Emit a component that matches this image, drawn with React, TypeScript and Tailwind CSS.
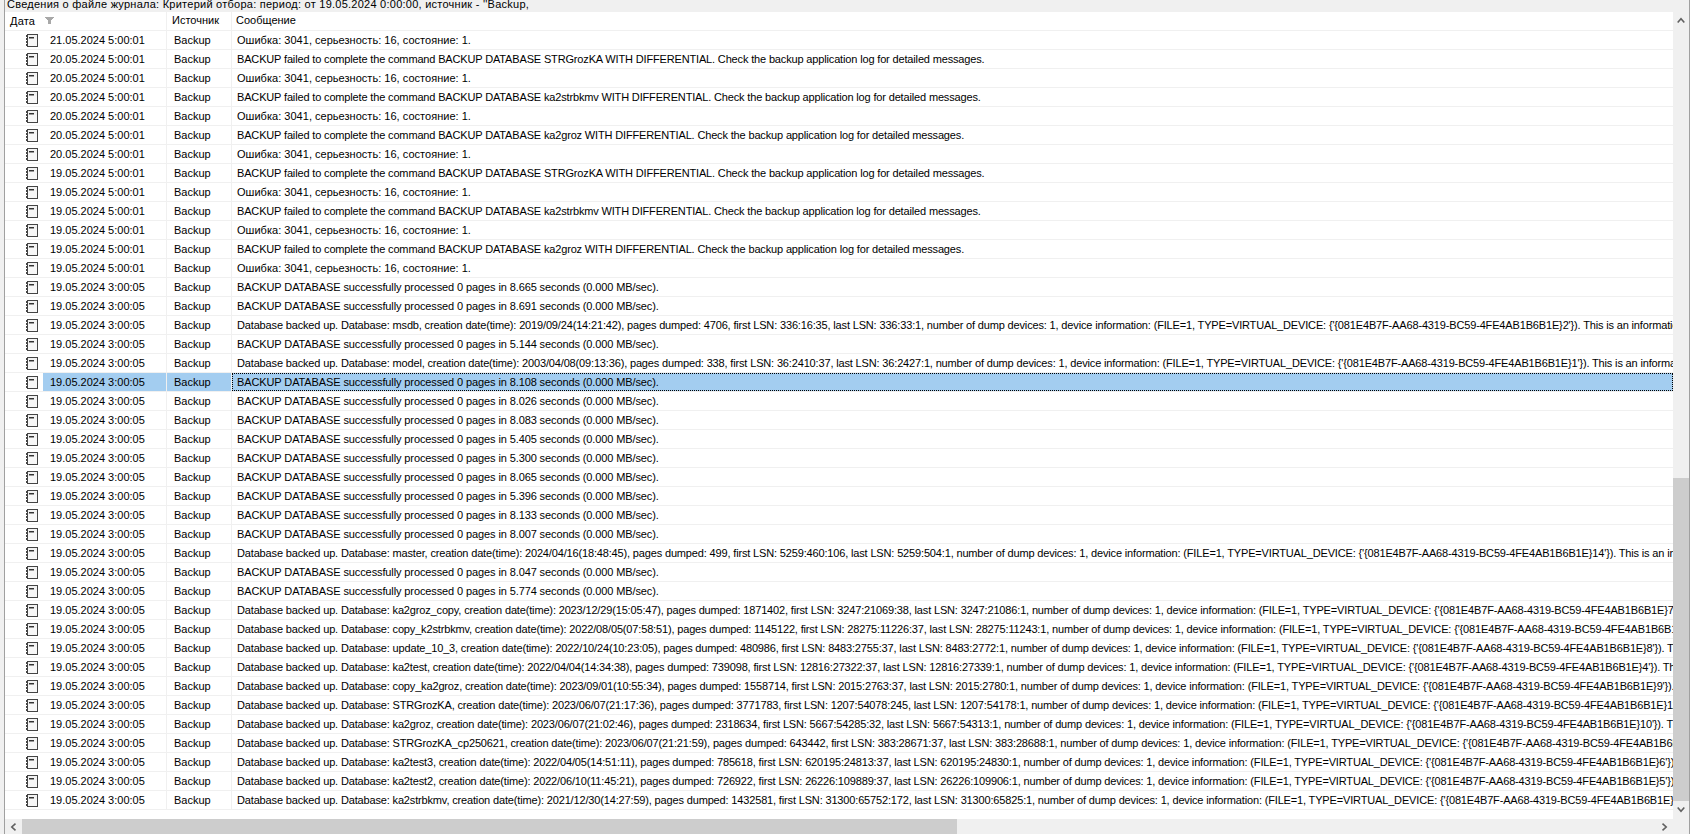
const d5 = (day: string) => `${day}.05.2024 5:00:01`;
const d3 = "19.05.2024 3:00:05";
const err = "Ошибка: 3041, серьезность: 16, состояние: 1.";
const fail = (db: string) => `BACKUP failed to complete the command BACKUP DATABASE ${db} WITH DIFFERENTIAL. Check the backup application log for detailed messages.`;
const ok = (s: string) => `BACKUP DATABASE successfully processed 0 pages in ${s} seconds (0.000 MB/sec).`;
const db = (name: string, dt: string, pages: string, first: string, last: string, n: string) =>
  `Database backed up. Database: ${name}, creation date(time): ${dt}, pages dumped: ${pages}, first LSN: ${first}, last LSN: ${last}, number of dump devices: 1, device information: (FILE=1, TYPE=VIRTUAL_DEVICE: {'{081E4B7F-AA68-4319-BC59-4FE4AB1B6B1E}${n}'}). This is an informational message only. No user action is required.`;

const rows: [string, string][] = [
  [d5("21"), err],
  [d5("20"), fail("STRGrozKA")],
  [d5("20"), err],
  [d5("20"), fail("ka2strbkmv")],
  [d5("20"), err],
  [d5("20"), fail("ka2groz")],
  [d5("20"), err],
  [d5("19"), fail("STRGrozKA")],
  [d5("19"), err],
  [d5("19"), fail("ka2strbkmv")],
  [d5("19"), err],
  [d5("19"), fail("ka2groz")],
  [d5("19"), err],
  [d3, ok("8.665")],
  [d3, ok("8.691")],
  [d3, db("msdb", "2019/09/24(14:21:42)", "4706", "336:16:35", "336:33:1", "2")],
  [d3, ok("5.144")],
  [d3, db("model", "2003/04/08(09:13:36)", "338", "36:2410:37", "36:2427:1", "1")],
  [d3, ok("8.108")],
  [d3, ok("8.026")],
  [d3, ok("8.083")],
  [d3, ok("5.405")],
  [d3, ok("5.300")],
  [d3, ok("8.065")],
  [d3, ok("5.396")],
  [d3, ok("8.133")],
  [d3, ok("8.007")],
  [d3, db("master", "2024/04/16(18:48:45)", "499", "5259:460:106", "5259:504:1", "14")],
  [d3, ok("8.047")],
  [d3, ok("5.774")],
  [d3, db("ka2groz_copy", "2023/12/29(15:05:47)", "1871402", "3247:21069:38", "3247:21086:1", "7")],
  [d3, db("copy_k2strbkmv", "2022/08/05(07:58:51)", "1145122", "28275:11226:37", "28275:11243:1", "3")],
  [d3, db("update_10_3", "2022/10/24(10:23:05)", "480986", "8483:2755:37", "8483:2772:1", "8")],
  [d3, db("ka2test", "2022/04/04(14:34:38)", "739098", "12816:27322:37", "12816:27339:1", "4")],
  [d3, db("copy_ka2groz", "2023/09/01(10:55:34)", "1558714", "2015:2763:37", "2015:2780:1", "9")],
  [d3, db("STRGrozKA", "2023/06/07(21:17:36)", "3771783", "1207:54078:245", "1207:54178:1", "11")],
  [d3, db("ka2groz", "2023/06/07(21:02:46)", "2318634", "5667:54285:32", "5667:54313:1", "10")],
  [d3, db("STRGrozKA_cp250621", "2023/06/07(21:21:59)", "643442", "383:28671:37", "383:28688:1", "12")],
  [d3, db("ka2test3", "2022/04/05(14:51:11)", "785618", "620195:24813:37", "620195:24830:1", "6")],
  [d3, db("ka2test2", "2022/06/10(11:45:21)", "726922", "26226:109889:37", "26226:109906:1", "5")],
  [d3, db("ka2strbkmv", "2021/12/30(14:27:59)", "1432581", "31300:65752:172", "31300:65825:1", "13")],
];

function tracking(message: string) {
  if (message.startsWith("Database")) return "tracking-[-0.156px]";
  if (message.startsWith("BACKUP failed")) return "tracking-[-0.155px]";
  if (message.startsWith("BACKUP DATABASE")) return "tracking-[-0.11px]";
  return "tracking-[0.025px]";
}

function LogIcon() {
  return (
    <svg width="12" height="13" viewBox="0 0 12 13" shapeRendering="crispEdges" className="shrink-0">
      <rect x="1" y="0" width="11" height="13" fill="#444444" />
      <rect x="2" y="1" width="9" height="11" fill="#f2f2f2" />
      <rect x="2" y="5" width="9" height="7" fill="#f7f7f7" />
      <rect x="3" y="3" width="5" height="1" fill="#333333" />
      <rect x="3" y="4" width="5" height="1" fill="#999999" />
      {[1, 4, 7, 10].map((y) => (
        <rect key={y} x="0" y={y} width="1" height="2" fill="#444444" />
      ))}
    </svg>
  );
}

function Row({ date, message, selected }: { date: string; message: string; selected: boolean }) {
  return (
    <div className="flex h-[19px] shrink-0 border-b border-[#f0f0f0] bg-white">
      <div className="flex w-[162px] shrink-0 border-r border-[#f0f0f0]">
        <div className="flex w-[38px] shrink-0 items-center pl-[21px]">
          <LogIcon />
        </div>
        <div className={selected ? "w-[123px] bg-[#a3cdf0] pl-[7px] leading-[18px]" : "w-[123px] pl-[7px] leading-[18px]"}>{date}</div>
      </div>
      <div className={selected ? "w-[65px] shrink-0 border-r border-[#f0f0f0] bg-[#a3cdf0] pl-[7px] leading-[18px]" : "w-[65px] shrink-0 border-r border-[#f0f0f0] pl-[7px] leading-[18px]"}>
        Backup
      </div>
      <div
        className={
          selected
            ? `min-w-0 flex-1 overflow-hidden whitespace-nowrap border border-dotted border-black bg-[#a3cdf0] pl-[4px] leading-[16px] ${tracking(message)}`
            : `min-w-0 flex-1 overflow-hidden whitespace-nowrap pl-[5px] leading-[18px] ${tracking(message)}`
        }
      >
        {message}
      </div>
    </div>
  );
}

export default function App() {
  return (
    <div className="flex h-[834px] w-[1690px] overflow-hidden bg-[#f0f0f0] font-['Liberation_Sans',sans-serif] text-[11px] text-black">
      <div className="w-[5px] shrink-0 border-r border-[#a0a0a0] bg-[#f0f0f0]" />
      <div className="flex min-w-0 flex-1 flex-col">
        <div className="h-[12px] shrink-0 overflow-hidden whitespace-nowrap pl-[2px] leading-[9px] tracking-[0.25px]">
          Сведения о файле журнала: Критерий отбора: период: от 19.05.2024 0:00:00, источник - ''Backup,
        </div>
        <div className="flex min-h-0 flex-1">
          <div className="flex w-[1668px] shrink-0 flex-col bg-white">
            <div className="flex h-[19px] shrink-0 border-b border-[#f0f0f0] leading-[17px]">
              <div className="flex w-[162px] shrink-0 items-center border-r border-[#f0f0f0] pl-[5px]">
                <span className="tracking-[0.2px]">Дата</span>
                <svg width="9" height="7" viewBox="0 0 9 7" shapeRendering="crispEdges" className="ml-[10px] mb-[2px]">
                  <path d="M0 0h9v1h-1v1h-1v1h-1v4h-3v-4h-1v-1h-1v-1h-1z" fill="#a8a8a8" />
                </svg>
              </div>
              <div className="w-[65px] shrink-0 border-r border-[#f0f0f0] pl-[5px]">Источник</div>
              <div className="flex-1 pl-[4px]">Сообщение</div>
            </div>
            {rows.map(([date, message], i) => (
              <Row key={i} date={date} message={message} selected={i === 18} />
            ))}
            <div className="min-h-0 flex-1 bg-white" />
            <div className="flex h-[15px] shrink-0 items-center bg-[#f0f0f0]">
              <div className="flex w-[17px] shrink-0 items-center justify-center">
                <svg width="7" height="8" viewBox="0 0 7 8" fill="none" stroke="#606060" strokeWidth="1.6">
                  <path d="M5.5 .7L1.8 4l3.7 3.3" />
                </svg>
              </div>
              <div className="h-[15px] w-[935px] bg-[#cdcdcd]" />
              <div className="flex-1" />
              <div className="flex w-[17px] shrink-0 items-center justify-center">
                <svg width="7" height="8" viewBox="0 0 7 8" fill="none" stroke="#606060" strokeWidth="1.6">
                  <path d="M1.5 .7L5.2 4 1.5 7.3" />
                </svg>
              </div>
            </div>
          </div>
          <div className="flex w-[16px] shrink-0 flex-col items-stretch bg-[#f0f0f0]">
            <div className="flex h-[17px] shrink-0 items-start justify-center pt-[5px]">
              <svg width="8" height="7" viewBox="0 0 8 7" fill="none" stroke="#606060" strokeWidth="1.6">
                <path d="M.7 5.5L4 1.8l3.3 3.7" />
              </svg>
            </div>
            <div className="h-[449px] shrink-0" />
            <div className="h-[323px] shrink-0 bg-[#cdcdcd]" />
            <div className="flex h-[17px] shrink-0 items-center justify-center">
              <svg width="8" height="7" viewBox="0 0 8 7" fill="none" stroke="#606060" strokeWidth="1.6">
                <path d="M.7 1.5L4 5.2l3.3-3.7" />
              </svg>
            </div>
          </div>
        </div>
      </div>
      <div className="w-[1px] shrink-0 bg-[#a0a0a0]" />
    </div>
  );
}
